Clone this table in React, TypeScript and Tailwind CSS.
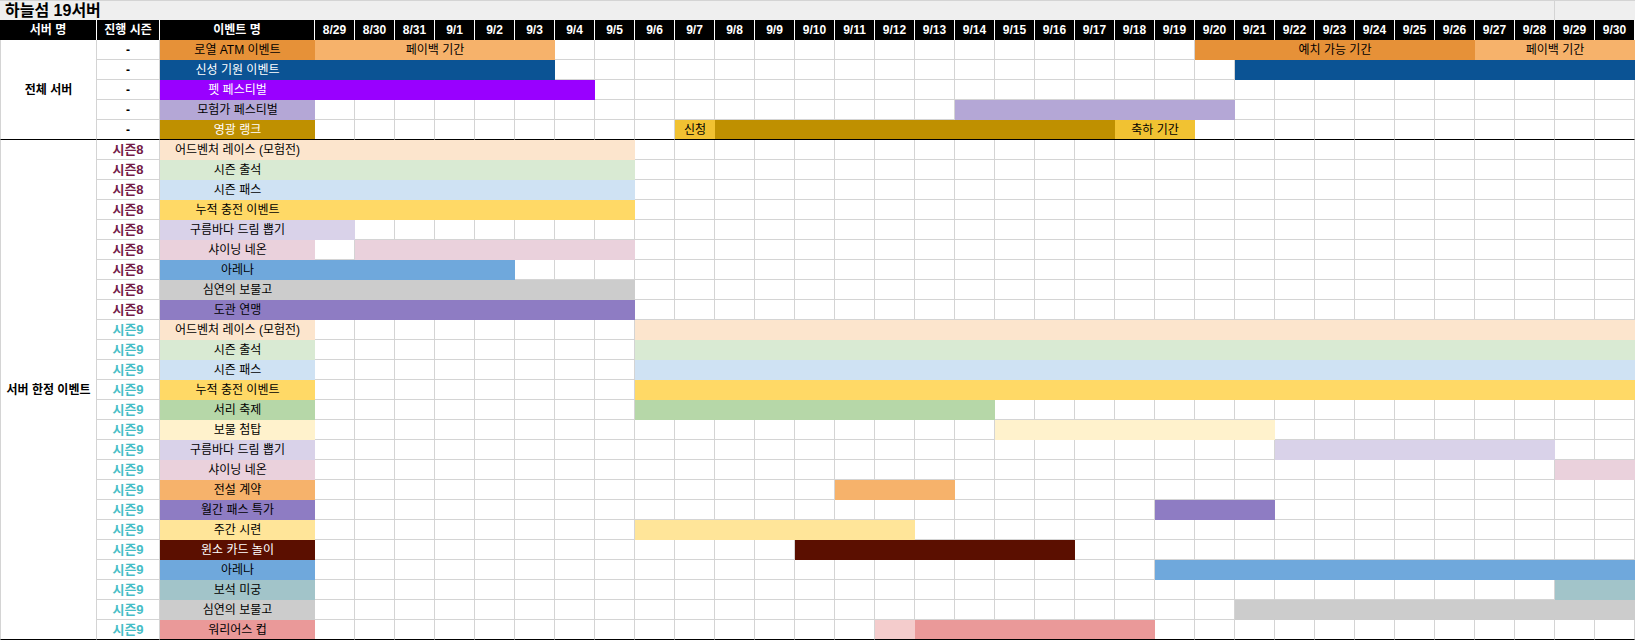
import React from "react";

type Seg = { s: number; e: number; bg: string; text?: string; light?: boolean };
type Row = { season: string; name: string; nameBg: string; light?: boolean; segs: Seg[] };

const DATES = [
  "8/29", "8/30", "8/31",
  ...Array.from({ length: 30 }, (_, i) => `9/${i + 1}`),
];

const S8 = "시즌8";
const S9 = "시즌9";

const GROUP1: Row[] = [
  {
    season: "-",
    name: "로열 ATM 이벤트",
    nameBg: "bg-[#e69138]",
    segs: [
      { s: 0, e: 5, bg: "bg-[#f6b26b]", text: "페이백 기간" },
      { s: 22, e: 28, bg: "bg-[#e69138]", text: "예치 가능 기간" },
      { s: 29, e: 32, bg: "bg-[#f6b26b]", text: "페이백 기간" },
    ],
  },
  {
    season: "-",
    name: "신성 기원 이벤트",
    nameBg: "bg-[#0b5394]",
    light: true,
    segs: [
      { s: 0, e: 5, bg: "bg-[#0b5394]" },
      { s: 23, e: 32, bg: "bg-[#0b5394]" },
    ],
  },
  {
    season: "-",
    name: "펫 페스티벌",
    nameBg: "bg-[#9900ff]",
    light: true,
    segs: [{ s: 0, e: 6, bg: "bg-[#9900ff]" }],
  },
  {
    season: "-",
    name: "모험가 페스티벌",
    nameBg: "bg-[#b4a7d6]",
    segs: [{ s: 16, e: 22, bg: "bg-[#b4a7d6]" }],
  },
  {
    season: "-",
    name: "영광 랭크",
    nameBg: "bg-[#bf9000]",
    light: true,
    segs: [
      { s: 9, e: 9, bg: "bg-[#f1c232]", text: "신청" },
      { s: 10, e: 19, bg: "bg-[#bf9000]" },
      { s: 20, e: 21, bg: "bg-[#f1c232]", text: "축하 기간" },
    ],
  },
];

const GROUP2: Row[] = [
  { season: S8, name: "어드벤처 레이스 (모험전)", nameBg: "bg-[#fce5cd]", segs: [{ s: 0, e: 7, bg: "bg-[#fce5cd]" }] },
  { season: S8, name: "시즌 출석", nameBg: "bg-[#d9ead3]", segs: [{ s: 0, e: 7, bg: "bg-[#d9ead3]" }] },
  { season: S8, name: "시즌 패스", nameBg: "bg-[#cfe2f3]", segs: [{ s: 0, e: 7, bg: "bg-[#cfe2f3]" }] },
  { season: S8, name: "누적 충전 이벤트", nameBg: "bg-[#ffd966]", segs: [{ s: 0, e: 7, bg: "bg-[#ffd966]" }] },
  { season: S8, name: "구름바다 드림 뽑기", nameBg: "bg-[#d9d2e9]", segs: [{ s: 0, e: 0, bg: "bg-[#d9d2e9]" }] },
  { season: S8, name: "샤이닝 네온", nameBg: "bg-[#ead1dc]", segs: [{ s: 1, e: 7, bg: "bg-[#ead1dc]" }] },
  { season: S8, name: "아레나", nameBg: "bg-[#6fa8dc]", segs: [{ s: 0, e: 4, bg: "bg-[#6fa8dc]" }] },
  { season: S8, name: "심연의 보물고", nameBg: "bg-[#cccccc]", segs: [{ s: 0, e: 7, bg: "bg-[#cccccc]" }] },
  { season: S8, name: "도관 연맹", nameBg: "bg-[#8e7cc3]", segs: [{ s: 0, e: 7, bg: "bg-[#8e7cc3]" }] },
  { season: S9, name: "어드벤처 레이스 (모험전)", nameBg: "bg-[#fce5cd]", segs: [{ s: 8, e: 32, bg: "bg-[#fce5cd]" }] },
  { season: S9, name: "시즌 출석", nameBg: "bg-[#d9ead3]", segs: [{ s: 8, e: 32, bg: "bg-[#d9ead3]" }] },
  { season: S9, name: "시즌 패스", nameBg: "bg-[#cfe2f3]", segs: [{ s: 8, e: 32, bg: "bg-[#cfe2f3]" }] },
  { season: S9, name: "누적 충전 이벤트", nameBg: "bg-[#ffd966]", segs: [{ s: 8, e: 32, bg: "bg-[#ffd966]" }] },
  { season: S9, name: "서리 축제", nameBg: "bg-[#b6d7a8]", segs: [{ s: 8, e: 16, bg: "bg-[#b6d7a8]" }] },
  { season: S9, name: "보물 첨탑", nameBg: "bg-[#fff2cc]", segs: [{ s: 17, e: 23, bg: "bg-[#fff2cc]" }] },
  { season: S9, name: "구름바다 드림 뽑기", nameBg: "bg-[#d9d2e9]", segs: [{ s: 24, e: 30, bg: "bg-[#d9d2e9]" }] },
  { season: S9, name: "샤이닝 네온", nameBg: "bg-[#ead1dc]", segs: [{ s: 31, e: 32, bg: "bg-[#ead1dc]" }] },
  { season: S9, name: "전설 계약", nameBg: "bg-[#f6b26b]", segs: [{ s: 13, e: 15, bg: "bg-[#f6b26b]" }] },
  { season: S9, name: "월간 패스 특가", nameBg: "bg-[#8e7cc3]", segs: [{ s: 21, e: 23, bg: "bg-[#8e7cc3]" }] },
  { season: S9, name: "주간 시련", nameBg: "bg-[#ffe599]", segs: [{ s: 8, e: 14, bg: "bg-[#ffe599]" }] },
  { season: S9, name: "윈소 카드 놀이", nameBg: "bg-[#5b0f00]", light: true, segs: [{ s: 12, e: 18, bg: "bg-[#5b0f00]" }] },
  { season: S9, name: "아레나", nameBg: "bg-[#6fa8dc]", segs: [{ s: 21, e: 32, bg: "bg-[#6fa8dc]" }] },
  { season: S9, name: "보석 미궁", nameBg: "bg-[#a2c4c9]", segs: [{ s: 31, e: 32, bg: "bg-[#a2c4c9]" }] },
  { season: S9, name: "심연의 보물고", nameBg: "bg-[#cccccc]", segs: [{ s: 23, e: 32, bg: "bg-[#cccccc]" }] },
  {
    season: S9,
    name: "워리어스 컵",
    nameBg: "bg-[#ea9999]",
    segs: [
      { s: 14, e: 14, bg: "bg-[#f4cccc]" },
      { s: 15, e: 20, bg: "bg-[#ea9999]" },
    ],
  },
];

function seasonColor(season: string) {
  if (season === S8) return "text-[#741b47] font-bold text-[13px]";
  if (season === S9) return "text-[#46bdc6] font-bold text-[13px]";
  return "text-black font-bold text-xs";
}

function DateCells({ row, last }: { row: Row; last: boolean }) {
  const cells: React.ReactNode[] = [];
  let i = 0;
  while (i < DATES.length) {
    const seg = row.segs.find((g) => g.s === i);
    if (seg) {
      const span = seg.e - seg.s + 1;
      cells.push(
        <div
          key={i}
          className={`${seg.bg} h-full shrink-0 flex items-center justify-center whitespace-nowrap text-xs text-black ${
            last ? "border-b border-black" : ""
          }`}
          style={{ width: `${span * 40}px` }}
        >
          {seg.text}
        </div>
      );
      i = seg.e + 1;
    } else {
      cells.push(
        <div
          key={i}
          className={`w-10 h-full shrink-0 border-r border-b ${
            last ? "border-r-[#d4d4d4] border-b-black" : "border-[#d4d4d4]"
          }`}
        />
      );
      i += 1;
    }
  }
  return <>{cells}</>;
}

function GanttRow({ row, last }: { row: Row; last: boolean }) {
  return (
    <div className="flex h-5">
      <div
        className={`w-[63px] shrink-0 h-full flex items-center justify-center border-r border-b leading-none ${
          last ? "border-r-[#d4d4d4] border-b-black" : "border-[#d4d4d4]"
        } ${seasonColor(row.season)}`}
      >
        {row.season}
      </div>
      <div
        className={`w-[155px] shrink-0 h-full flex items-center justify-center whitespace-nowrap text-xs leading-none ${row.nameBg} ${
          row.light ? "text-white" : "text-black"
        } ${last ? "border-b border-black" : ""}`}
      >
        {row.name}
      </div>
      <DateCells row={row} last={last} />
    </div>
  );
}

function Group({ label, rows }: { label: string; rows: Row[] }) {
  return (
    <div className="flex">
      <div className="w-[97px] shrink-0 flex items-center justify-center border-l border-r border-l-[#d4d4d4] border-r-[#d4d4d4] border-b border-b-black text-xs font-bold text-black whitespace-nowrap">
        {label}
      </div>
      <div className="flex flex-col">
        {rows.map((r, idx) => (
          <GanttRow key={idx} row={r} last={idx === rows.length - 1} />
        ))}
      </div>
    </div>
  );
}

export default function App() {
  return (
    <div className="w-[1636px] h-[641px] bg-white overflow-hidden font-['Liberation_Sans','Noto_Sans_CJK_KR',sans-serif]">
      <div className="w-[1635px]">
        {/* Title row */}
        <div className="flex h-5 bg-[#efefef] border-t border-[#d4d4d4]">
          <div className="w-[1555px] shrink-0 border-r border-[#d4d4d4] flex items-center pl-[5px] text-base font-bold text-black leading-none">
            하늘섬 19서버
          </div>
          <div className="flex-1" />
        </div>
        {/* Header row */}
        <div className="flex h-5 bg-black text-white text-xs font-bold leading-none">
          <div className="w-[97px] shrink-0 border-r border-white flex items-center justify-center">서버 명</div>
          <div className="w-[63px] shrink-0 border-r border-white flex items-center justify-center">진행 시즌</div>
          <div className="w-[155px] shrink-0 border-r border-white flex items-center justify-center">이벤트 명</div>
          {DATES.map((d) => (
            <div key={d} className="w-10 shrink-0 border-r border-white flex items-center justify-center">
              {d}
            </div>
          ))}
        </div>
        <Group label="전체 서버" rows={GROUP1} />
        <Group label="서버 한정 이벤트" rows={GROUP2} />
      </div>
    </div>
  );
}
